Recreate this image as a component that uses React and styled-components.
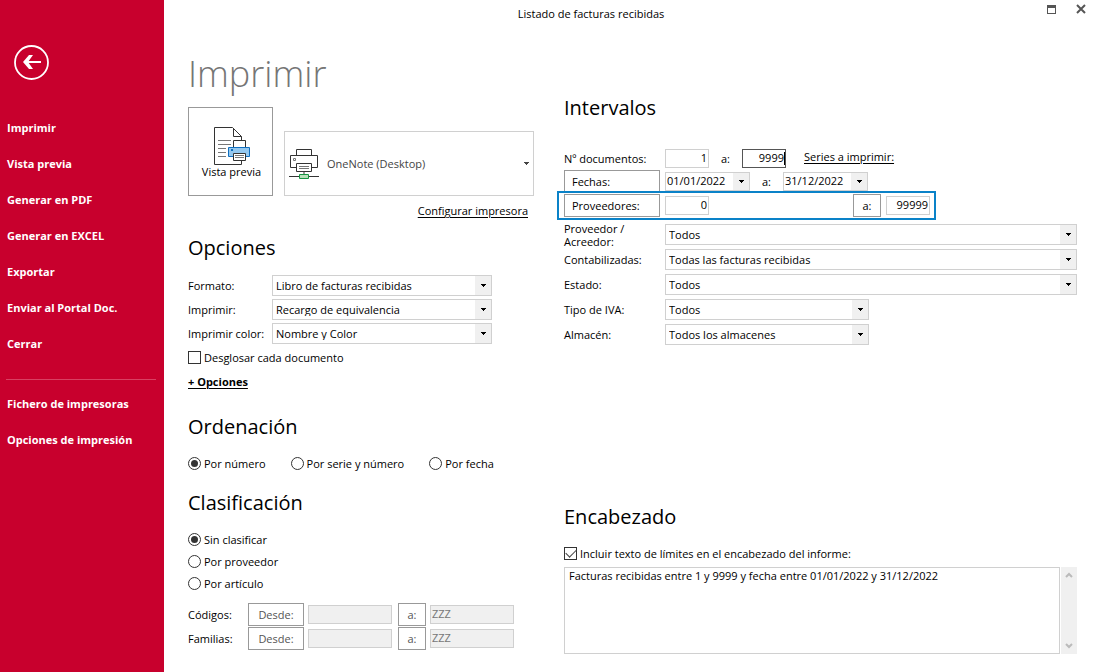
import React, { useState } from "react";
import styled, { createGlobalStyle } from "styled-components";

const menuItems = [
  "Imprimir",
  "Vista previa",
  "Generar en PDF",
  "Generar en EXCEL",
  "Exportar",
  "Enviar al Portal Doc.",
  "Cerrar",
];

const printerItems = ["Fichero de impresoras", "Opciones de impresión"];

const DropDown = ({ id, value }) => (
  <StSelectBox>
    <StSelect id={id} defaultValue={value}>
      <option>{value}</option>
    </StSelect>
    <StArrow>
      <ArrowIcon />
    </StArrow>
  </StSelectBox>
);

const ArrowIcon = () => (
  <svg width="5" height="3" viewBox="0 0 5 3" shapeRendering="crispEdges">
    <path d="M0 0h5v1H4v1H3v1H2V2H1V1H0z" fill="currentColor" />
  </svg>
);

const BackIcon = () => (
  <svg width="35" height="35" viewBox="0 0 35 35" fill="none" stroke="#fff">
    <circle cx="17.5" cy="17.5" r="16.5" strokeWidth="1.8" />
    <path d="M10 17h17" strokeWidth="2" />
    <path d="M15 10h4l-5 7 5 7h-4l-6-7z" fill="#fff" stroke="none" />
  </svg>
);

const PreviewIcon = () => (
  <svg width="38" height="38" viewBox="0 0 38 38" fill="none">
    <path d="M28.5 34v3.5h-27V.5h18l9 9V14" stroke="#333" fill="#fff" />
    <path d="M20.5 1v8.500h8" stroke="#333" />
    <path
      d="M5 13.500h13M5 17.500h13M5 21.500h8M5 25.500h8M5 29.500h8"
      stroke="#777"
    />
    <path d="M20.500 20v-6.500h12V20" stroke="#333" fill="#fff" />
    <path d="M15.500 20.500h21v9h-21z" stroke="#106ebe" fill="#94c8ef" />
    <path d="M18 22h2v2h-2z" fill="#106ebe" />
    <path d="M20.500 26.500h12v7h-12z" stroke="#333" fill="#fff" />
    <path d="M22 28.500h9M22 30.500h9" stroke="#777" />
  </svg>
);

const PrinterIcon = () => (
  <svg width="30" height="30" viewBox="0 0 30 30" fill="none">
    <path d="M7.500 6V.5h15V6" stroke="#333" />
    <path d="M7 18.500H1.500v-12h27v12H23" stroke="#333" />
    <path d="M4.500 9.500h2v2h-2z" stroke="#777" />
    <path d="M7.500 14.500h15v8h-15z" stroke="#333" fill="#fff" />
    <path d="M10 17.500h10M10 19.500h10" stroke="#777" />
    <path d="M15 23v2" stroke="#999" strokeWidth="2" />
    <path d="M0 27.500h30" stroke="#333" />
    <path d="M10.500 25.500h9v4h-9z" stroke="#159540" fill="#b7e0b9" />
  </svg>
);

const App = () => {
  const [order, setOrder] = useState("Por número");
  const [group, setGroup] = useState("Sin clasificar");

  return (
    <StContainer>
      <GlobalStyle />
      <StSidebar>
        <StBackButton aria-label="Volver">
          <BackIcon />
        </StBackButton>
        <StMenu>
          {menuItems.map((item) => (
            <StMenuButton key={item}>{item}</StMenuButton>
          ))}
        </StMenu>
        <StLine />
        <StMenu>
          {printerItems.map((item) => (
            <StMenuButton key={item}>{item}</StMenuButton>
          ))}
        </StMenu>
      </StSidebar>

      <StMain>
        <StTopBar>
          <StTitle>Listado de facturas recibidas</StTitle>
          <StWindowButtons>
            <StWindowButton aria-label="Maximizar">
              <svg width="9" height="9" viewBox="0 0 9 9">
                <path d="M0 0h9v9H0zM1 3v5h7V3z" fill="#555" fillRule="evenodd" />
              </svg>
            </StWindowButton>
            <StWindowButton aria-label="Cerrar ventana">
              <svg width="10" height="10" viewBox="0 0 10 10">
                <path d="M1 1l8 8M9 1l-8 8" stroke="#555" strokeWidth="2" />
              </svg>
            </StWindowButton>
          </StWindowButtons>
        </StTopBar>

        <StBody>
          <StLeftBox>
            <StH1>Imprimir</StH1>
            <StPrinterBox>
              <StPreviewButton>
                <PreviewIcon />
                Vista previa
              </StPreviewButton>
              <StPrinterSelectBox>
                <StPrinterSelect
                  aria-label="Impresora"
                  defaultValue="OneNote (Desktop)"
                >
                  <option>OneNote (Desktop)</option>
                </StPrinterSelect>
                <StPrinterIcon>
                  <PrinterIcon />
                </StPrinterIcon>
                <StArrow $plain>
                  <ArrowIcon />
                </StArrow>
              </StPrinterSelectBox>
            </StPrinterBox>
            <StConfigBox>
              <StLink href="#configurar">Configurar impresora</StLink>
            </StConfigBox>

            <StSection>
              <StH2>Opciones</StH2>
              <StOptionRow>
                <label htmlFor="formato">Formato:</label>
                <DropDown id="formato" value="Libro de facturas recibidas" />
              </StOptionRow>
              <StOptionRow>
                <label htmlFor="imprimir">Imprimir:</label>
                <DropDown id="imprimir" value="Recargo de equivalencia" />
              </StOptionRow>
              <StOptionRow>
                <label htmlFor="color">Imprimir color:</label>
                <DropDown id="color" value="Nombre y Color" />
              </StOptionRow>
              <StCheckLabel $tall>
                <StCheck type="checkbox" />
                Desglosar cada documento
              </StCheckLabel>
              <StMore>
                <StLink href="#opciones" $bold>
                  + Opciones
                </StLink>
              </StMore>
            </StSection>

            <StSection>
              <StH2>Ordenación</StH2>
              <StRadioRow>
                {["Por número", "Por serie y número", "Por fecha"].map((name) => (
                  <StCheckLabel key={name}>
                    <StRadio
                      type="radio"
                      name="order"
                      checked={order === name}
                      onChange={() => setOrder(name)}
                    />
                    {name}
                  </StCheckLabel>
                ))}
              </StRadioRow>
            </StSection>

            <StSection>
              <StH2>Clasificación</StH2>
              {["Sin clasificar", "Por proveedor", "Por artículo"].map((name) => (
                <StCheckLabel key={name}>
                  <StRadio
                    type="radio"
                    name="group"
                    checked={group === name}
                    onChange={() => setGroup(name)}
                  />
                  {name}
                </StCheckLabel>
              ))}
              <StRangeList>
                {["Códigos", "Familias"].map((name) => (
                  <StRangeRow key={name}>
                    <span>{name}:</span>
                    <StButton disabled>Desde:</StButton>
                    <StInput disabled aria-label={name + " desde"} />
                    <StButton disabled>a:</StButton>
                    <StInput
                      disabled
                      aria-label={name + " hasta"}
                      defaultValue="ZZZ"
                    />
                  </StRangeRow>
                ))}
              </StRangeList>
            </StSection>
          </StLeftBox>

          <StRightBox>
            <StH2>Intervalos</StH2>
            <StDocRow>
              <label htmlFor="desde">Nº documentos:</label>
              <StInput id="desde" $right defaultValue="1" />
              <StTo htmlFor="hasta">a:</StTo>
              <StFocusBox>
                <StInput id="hasta" $right $active defaultValue="9999" />
                <StCaret />
              </StFocusBox>
              <StSeries>
                <StLink href="#series">Series a imprimir:</StLink>
              </StSeries>
            </StDocRow>
            <StDateRow>
              <StButton $left>Fechas:</StButton>
              <StDateBox>
                <StInput aria-label="Fecha desde" defaultValue="01/01/2022" />
                <StArrow>
                  <ArrowIcon />
                </StArrow>
              </StDateBox>
              <StTo htmlFor="fechaHasta">a:</StTo>
              <StDateBox>
                <StInput id="fechaHasta" defaultValue="31/12/2022" />
                <StArrow>
                  <ArrowIcon />
                </StArrow>
              </StDateBox>
            </StDateRow>
            <StHighlight>
              <StButton $left>Proveedores:</StButton>
              <StInput aria-label="Proveedor desde" $right defaultValue="0" />
              <StToButton>a:</StToButton>
              <StInput aria-label="Proveedor hasta" $right defaultValue="99999" />
            </StHighlight>
            <StFilterList>
              <StFilterRow>
                <label htmlFor="proveedor">Proveedor / Acreedor:</label>
                <DropDown id="proveedor" value="Todos" />
              </StFilterRow>
              <StFilterRow>
                <label htmlFor="contabilizadas">Contabilizadas:</label>
                <DropDown id="contabilizadas" value="Todas las facturas recibidas" />
              </StFilterRow>
              <StFilterRow>
                <label htmlFor="estado">Estado:</label>
                <DropDown id="estado" value="Todos" />
              </StFilterRow>
              <StFilterRow $short>
                <label htmlFor="iva">Tipo de IVA:</label>
                <DropDown id="iva" value="Todos" />
              </StFilterRow>
              <StFilterRow $short>
                <label htmlFor="almacen">Almacén:</label>
                <DropDown id="almacen" value="Todos los almacenes" />
              </StFilterRow>
            </StFilterList>

            <StHeaderBox>
              <StH2>Encabezado</StH2>
              <StCheckLabel>
                <StCheck type="checkbox" defaultChecked />
                Incluir texto de límites en el encabezado del informe:
              </StCheckLabel>
              <StTextBox>
                <StTextarea
                  aria-label="Texto del encabezado"
                  defaultValue="Facturas recibidas entre 1 y 9999 y fecha entre 01/01/2022 y 31/12/2022"
                />
                <StScroll>
                  <svg width="8" height="6" viewBox="0 0 8 6" fill="none">
                    <path d="M1 5l3-3 3 3" stroke="#bbb" strokeWidth="2" />
                  </svg>
                  <svg width="8" height="6" viewBox="0 0 8 6" fill="none">
                    <path d="M1 1l3 3 3-3" stroke="#bbb" strokeWidth="2" />
                  </svg>
                </StScroll>
              </StTextBox>
            </StHeaderBox>
          </StRightBox>
        </StBody>
      </StMain>
    </StContainer>
  );
};

export default App;

const GlobalStyle = createGlobalStyle`
  * {
    box-sizing: border-box;
  }
  body {
    margin: 0;
    background: #fff;
    color: #000;
    font-family: "Open Sans", "Noto Sans", sans-serif;
    font-size: 11px;
    line-height: 13px;
  }
  button, input, select, textarea {
    font: inherit;
    color: inherit;
    margin: 0;
    border-radius: 0;
  }
  svg {
    display: block;
  }
`;

const StContainer = styled.div`
  display: flex;
  min-height: 100vh;
`;

const StSidebar = styled.aside`
  width: 164px;
  flex-shrink: 0;
  padding: 45px 8px 0 6px;
  background: #c8002d;
  color: #fff;
`;

const StBackButton = styled.button`
  display: block;
  margin: 0 0 29px 8px;
  padding: 0;
  border: 0;
  background: none;
  cursor: pointer;
`;

const StMenu = styled.nav`
  display: flex;
  flex-direction: column;
`;

const StMenuButton = styled.button`
  height: 36px;
  padding: 0 1px;
  border: 0;
  background: none;
  font-weight: 700;
  text-align: left;
  white-space: nowrap;
  cursor: pointer;
`;

const StLine = styled.hr`
  height: 1px;
  margin: 18px 0 5px;
  border: 0;
  background: #d94062;
`;

const StMain = styled.main`
  flex: 1;
  min-width: 0;
  display: flex;
  flex-direction: column;
`;

const StTopBar = styled.header`
  display: flex;
  align-items: center;
  height: 26px;
`;

const StTitle = styled.div`
  flex: 1;
  text-align: center;
`;

const StWindowButtons = styled.div`
  display: flex;
  gap: 4px;
  padding: 0 0 8px 20px;
`;

const StWindowButton = styled.button`
  display: grid;
  place-items: center;
  width: 26px;
  height: 18px;
  padding: 0;
  border: 0;
  background: none;
`;

const StBody = styled.div`
  flex: 1;
  display: flex;
  gap: 30px;
  padding: 0 17px 18px 24px;
`;

const StLeftBox = styled.div`
  width: 346px;
  flex-shrink: 0;
`;

const StRightBox = styled.div`
  flex: 1;
  min-width: 0;
  display: flex;
  flex-direction: column;
  padding-top: 67px;
`;

const StH1 = styled.h1`
  margin: 0;
  padding: 24px 0 9px;
  color: #757575;
  font-size: 36px;
  font-weight: 300;
  line-height: 48px;
`;

const StH2 = styled.h2`
  margin: 0 0 10px;
  font-size: 20px;
  font-weight: 400;
  line-height: 30px;
`;

const StPrinterBox = styled.div`
  display: flex;
  align-items: flex-end;
  gap: 11px;
`;

const StPreviewButton = styled.button`
  display: flex;
  flex-direction: column;
  align-items: center;
  justify-content: center;
  width: 85px;
  height: 89px;
  padding: 2px 0 0 2px;
  border: 1px solid #999;
  background: #fff;
`;

const StSelectBox = styled.div`
  display: grid;
  height: 21px;
  border: 1px solid #d0d0d0;

  > * {
    grid-area: 1 / 1;
  }
`;

const StSelect = styled.select`
  appearance: none;
  width: 100%;
  padding: 0 18px 0 3px;
  border: 0;
  outline: 0;
  background: #fff;
`;

const StArrow = styled.span`
  justify-self: end;
  display: grid;
  place-items: center;
  width: ${(props) => (props.$plain ? "14px" : "16px")};
  background: ${(props) => (props.$plain ? "none" : "#f0f0f0")};
  pointer-events: none;
`;

const StPrinterSelectBox = styled(StSelectBox)`
  flex: 1;
  height: 65px;
  color: #444;
`;

const StPrinterSelect = styled(StSelect)`
  padding-left: 42px;
`;

const StPrinterIcon = styled.span`
  display: flex;
  align-items: center;
  justify-self: start;
  padding-left: 4px;
  pointer-events: none;
`;

const StConfigBox = styled.div`
  display: flex;
  justify-content: flex-end;
  padding: 8px 6px 16px 0;
`;

const StLink = styled.a`
  color: #000;
  font-weight: ${(props) => (props.$bold ? 700 : 400)};
  text-underline-offset: 2px;
`;

const StSection = styled.section`
  display: flex;
  flex-direction: column;

  & + & {
    margin-top: 14px;
  }
`;

const StOptionRow = styled.div`
  display: grid;
  grid-template-columns: 84px 220px;
  align-items: center;
  height: 24px;
`;

const StCheckLabel = styled.label`
  display: flex;
  align-items: center;
  gap: 3px;
  height: ${(props) => (props.$tall ? "24px" : "22px")};
  white-space: nowrap;
`;

const StCheck = styled.input`
  appearance: none;
  display: grid;
  place-items: center;
  width: 13px;
  height: 13px;
  border: 1px solid #333;
  background: #fff;

  &:checked::before {
    content: "";
    width: 9px;
    height: 5px;
    border: solid #444;
    border-width: 0 0 1px 1px;
    transform: translateY(-1px) rotate(-45deg);
  }
`;

const StRadio = styled.input`
  appearance: none;
  display: grid;
  place-items: center;
  width: 13px;
  height: 13px;
  border: 1px solid #333;
  border-radius: 50%;

  &:checked::before {
    content: "";
    width: 7px;
    height: 7px;
    border-radius: 50%;
    background: #333;
  }
`;

const StMore = styled.div`
  padding: 6px 0 10px;
`;

const StRadioRow = styled.div`
  display: flex;
  gap: 25px;
`;

const StRangeList = styled.div`
  padding-top: 8px;
`;

const StButton = styled.button`
  height: 23px;
  padding: 0 7px;
  border: 1px solid #999;
  background: #fff;
  text-align: ${(props) => (props.$left ? "left" : "center")};

  &:disabled {
    color: #555;
  }
`;

const StToButton = styled(StButton)`
  justify-self: end;
  width: 28px;
`;

const StInput = styled.input`
  width: 100%;
  min-width: 0;
  height: 19px;
  padding: 0 1px 2px;
  border: 1px solid ${(props) => (props.$active ? "#555" : "#d0d0d0")};
  outline: 0;
  background: #fff;
  text-align: ${(props) => (props.$right ? "right" : "left")};

  &:disabled {
    background: #f0f0f0;
    color: #777;
  }
`;

const StRangeRow = styled.div`
  display: grid;
  grid-template-columns: 56px 56px 86px 28px 84px;
  column-gap: 4px;
  align-items: center;
  height: 24px;

  ${StInput} {
    width: 84px;
  }
`;

const StDocRow = styled.div`
  display: grid;
  grid-template-columns: 96px 44px 23px 44px auto;
  column-gap: 5px;
  align-items: center;
  height: 24px;
  margin-top: 13px;
`;

const StTo = styled.label`
  padding-left: 7px;
`;

const StFocusBox = styled.div`
  display: grid;
  align-items: center;

  > * {
    grid-area: 1 / 1;
  }
`;

const StCaret = styled.span`
  justify-self: end;
  width: 1px;
  height: 13px;
  margin-right: 1px;
  background: #000;
`;

const StSeries = styled.div`
  padding: 0 0 3px 13px;
`;

const StDateRow = styled.div`
  display: grid;
  grid-template-columns: 96px 85px 23px 85px;
  column-gap: 5px;
  align-items: center;
  height: 23px;
`;

const StDateBox = styled.div`
  display: grid;

  > * {
    grid-area: 1 / 1;
  }

  ${StArrow} {
    margin: 1px;
  }
`;

const StHighlight = styled.div`
  display: grid;
  grid-template-columns: 96px 44px 1fr 44px;
  column-gap: 5px;
  align-items: center;
  width: 379px;
  margin: -2px 0 0 -7px;
  padding: 1px 4px 1px 5px;
  border: 2px solid #0a82c8;
  background: #fff;
`;

const StFilterList = styled.div`
  padding-top: 2px;
`;

const StFilterRow = styled.div`
  display: grid;
  grid-template-columns: 70px ${(props) => (props.$short ? "204px" : "1fr")};
  grid-template-rows: 25px;
  column-gap: 31px;
  align-items: center;
`;

const StHeaderBox = styled.section`
  margin-top: auto;
`;

const StTextBox = styled.div`
  display: flex;
  gap: 1px;
  height: 87px;
  margin-top: 3px;
`;

const StTextarea = styled.textarea`
  flex: 1;
  padding: 1px 4px;
  border: 1px solid #d0d0d0;
  outline: 0;
  resize: none;
`;

const StScroll = styled.div`
  display: flex;
  flex-direction: column;
  justify-content: space-between;
  align-items: center;
  width: 16px;
  padding: 5px 0;
  background: #f0f0f0;
`;
